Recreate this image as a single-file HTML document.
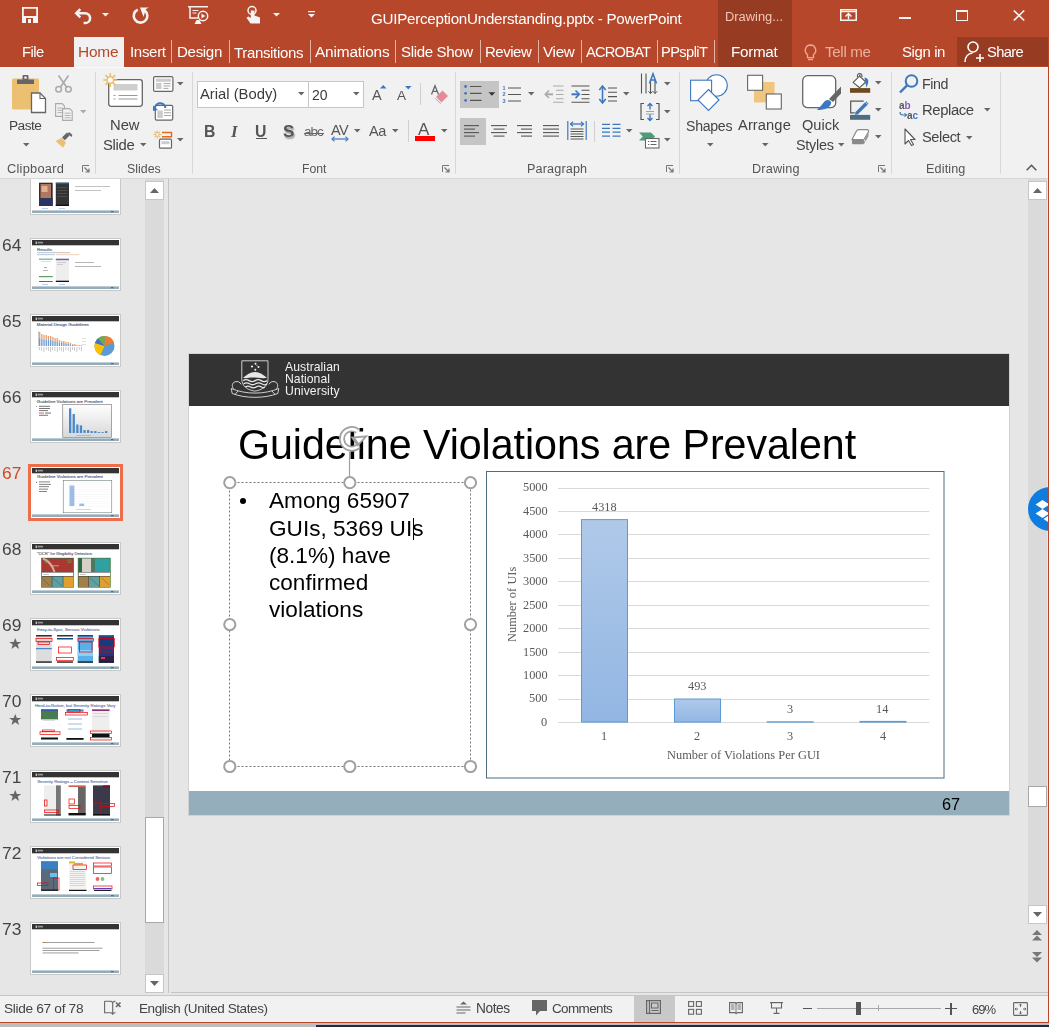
<!DOCTYPE html>
<html><head><meta charset="utf-8">
<style>
*{margin:0;padding:0;box-sizing:border-box}
html,body{width:1049px;height:1027px;overflow:hidden;background:#e6e6e6;font-family:"Liberation Sans",sans-serif;position:relative}
.a{position:absolute}
.t{position:absolute;white-space:nowrap;line-height:1;will-change:transform}
svg{position:absolute;overflow:visible}
</style></head><body>
<div class="a" style="left:0;top:0;width:1049px;height:67px;background:#b7472a"></div>
<div class="a" style="left:718px;top:0;width:74px;height:67px;background:#983b23"></div>
<div class="a" style="left:957px;top:37px;width:91px;height:29px;background:#983b23"></div>
<div class="a" style="left:74px;top:37px;width:50px;height:31px;background:#f1f1f1"></div>
<svg style="left:22px;top:7px" width="16" height="16" viewBox="0 0 16 16">
<path d="M0.9 0.9h14.2v14.2H0.9z" fill="none" stroke="#f4f4f4" stroke-width="1.8"/>
<rect x="0" y="9" width="16" height="7" fill="#f4f4f4"/>
<rect x="4" y="11" width="7" height="5" fill="#b7472a"/>
<rect x="6" y="12" width="3" height="4" fill="#f4f4f4"/>
</svg>
<svg style="left:74px;top:8px" width="19" height="16" viewBox="0 0 19 16">
<path d="M3 5.3h8.2a4.9 4.9 0 0 1 0 9.8h-1.6" fill="none" stroke="#f4f4f4" stroke-width="2.5"/>
<path d="M6.3 1.2L2.2 5.3l4.1 4.1" fill="none" stroke="#f4f4f4" stroke-width="2.5"/>
</svg>
<svg style="left:102px;top:13px" width="7" height="4" viewBox="0 0 7 4"><path d="M0 0h7l-3.5 3.5z" fill="#f4f4f4"/></svg>
<svg style="left:132px;top:6px" width="19" height="18" viewBox="0 0 19 18">
<path d="M5.8 3.6A6.8 6.8 0 1 0 12.8 4.5" fill="none" stroke="#f4f4f4" stroke-width="2.6"/>
<path d="M8 1.5h9l-3 1.5-2.5 8z" fill="#f4f4f4"/>
</svg>
<svg style="left:188px;top:6px" width="21" height="19" viewBox="0 0 21 19">
<path d="M0 0.75h20" stroke="#f4f4f4" stroke-width="1.5"/>
<path d="M2 1v11h8" fill="none" stroke="#f4f4f4" stroke-width="1.5"/>
<path d="M4.5 4.5h6M4.5 7h4" stroke="#f4f4f4" stroke-width="1.2"/>
<circle cx="15" cy="10" r="4.7" fill="none" stroke="#f4f4f4" stroke-width="1.5"/>
<path d="M13.5 7.5v5l3.8-2.5z" fill="#f4f4f4"/>
<path d="M6.5 18h7l-2-4h-3z" fill="#f4f4f4"/>
</svg>
<svg style="left:246px;top:6px" width="15" height="18" viewBox="0 0 15 18">
<circle cx="6" cy="4.5" r="4" fill="none" stroke="#f4f4f4" stroke-width="1.5"/>
<path d="M4.8 4.5v7.5l-2.5-1.5-1.8 1.2 4 5.8h9.5v-6l-5.5-2v-5z" fill="#f4f4f4"/>
</svg>
<svg style="left:273px;top:13px" width="7" height="4" viewBox="0 0 7 4"><path d="M0 0h7l-3.5 3.5z" fill="#f4f4f4"/></svg>
<svg style="left:308px;top:11px" width="7" height="8" viewBox="0 0 7 8"><path d="M0 0.6h7" stroke="#f4f4f4" stroke-width="1.2"/><path d="M0 3h7l-3.5 3.5z" fill="#f4f4f4"/></svg>
<div class="t" style="left:370.54px;top:10.55px;font-size:15.17px;letter-spacing:-0.259px;color:#fff;font-family:'Liberation Sans', sans-serif;">GUIPerceptionUnderstanding.pptx - PowerPoint</div>
<div class="t" style="left:724.91px;top:10.96px;font-size:12.92px;letter-spacing:-0.007px;color:#f3c5b5;font-family:'Liberation Sans', sans-serif;">Drawing...</div>
<svg style="left:840px;top:9px" width="17" height="12" viewBox="0 0 17 12">
<rect x="0.75" y="0.75" width="15.5" height="10.5" fill="none" stroke="#f4f4f4" stroke-width="1.5"/>
<path d="M1 2.5h15" stroke="#f4f4f4" stroke-width="1.5"/>
<path d="M8.5 4.5v6M5.5 7.5l3-3 3 3" fill="none" stroke="#f4f4f4" stroke-width="1.5"/>
</svg>
<div class="a" style="left:899px;top:17px;width:12px;height:2px;background:#f4f4f4"></div>
<div class="a" style="left:956px;top:10px;width:12px;height:11px;border:1.5px solid #f4f4f4;border-top-width:2.5px"></div>
<svg style="left:1013px;top:10px" width="12" height="11" viewBox="0 0 12 11">
<path d="M0.8 0.5l10.4 10M11.2 0.5l-10.4 10" stroke="#f4f4f4" stroke-width="1.7"/>
</svg>
<div class="t" style="left:22.06px;top:44.75px;font-size:14.71px;letter-spacing:-0.533px;color:#fff;font-family:'Liberation Sans', sans-serif;">File</div>
<div class="t" style="left:78.04px;top:44.13px;font-size:15.44px;letter-spacing:-0.229px;color:#b7472a;font-family:'Liberation Sans', sans-serif;">Home</div>
<div class="t" style="left:129.55px;top:44.46px;font-size:15.05px;letter-spacing:-0.326px;color:#fff;font-family:'Liberation Sans', sans-serif;">Insert</div>
<div class="t" style="left:176.85px;top:44.38px;font-size:15.14px;letter-spacing:-0.346px;color:#fff;font-family:'Liberation Sans', sans-serif;">Design</div>
<div class="t" style="left:233.95px;top:44.50px;font-size:15.00px;letter-spacing:-0.340px;color:#fff;font-family:'Liberation Sans', sans-serif;">Transitions</div>
<div class="t" style="left:314.54px;top:44.16px;font-size:15.40px;letter-spacing:-0.164px;color:#fff;font-family:'Liberation Sans', sans-serif;">Animations</div>
<div class="t" style="left:400.85px;top:44.44px;font-size:15.07px;letter-spacing:-0.346px;color:#fff;font-family:'Liberation Sans', sans-serif;">Slide Show</div>
<div class="t" style="left:484.55px;top:44.52px;font-size:14.97px;letter-spacing:-0.477px;color:#fff;font-family:'Liberation Sans', sans-serif;">Review</div>
<div class="t" style="left:542.54px;top:44.29px;font-size:15.25px;letter-spacing:-0.324px;color:#fff;font-family:'Liberation Sans', sans-serif;">View</div>
<div class="t" style="left:585.56px;top:44.77px;font-size:14.68px;letter-spacing:-0.810px;color:#fff;font-family:'Liberation Sans', sans-serif;">ACROBAT</div>
<div class="t" style="left:661.16px;top:44.78px;font-size:14.67px;letter-spacing:-0.590px;color:#fff;font-family:'Liberation Sans', sans-serif;">PPspliT</div>
<div class="t" style="left:731.04px;top:44.31px;font-size:15.22px;letter-spacing:-0.302px;color:#fff;font-family:'Liberation Sans', sans-serif;">Format</div>
<div class="t" style="left:902.15px;top:44.55px;font-size:14.95px;letter-spacing:-0.383px;color:#fff;font-family:'Liberation Sans', sans-serif;">Sign in</div>
<div class="t" style="left:986.56px;top:44.75px;font-size:14.71px;letter-spacing:-0.661px;color:#fff;font-family:'Liberation Sans', sans-serif;">Share</div>
<div class="a" style="left:171px;top:40px;width:1px;height:23px;background:#e6b2a4"></div>
<div class="a" style="left:229px;top:40px;width:1px;height:23px;background:#e6b2a4"></div>
<div class="a" style="left:310px;top:40px;width:1px;height:23px;background:#e6b2a4"></div>
<div class="a" style="left:395px;top:40px;width:1px;height:23px;background:#e6b2a4"></div>
<div class="a" style="left:480px;top:40px;width:1px;height:23px;background:#e6b2a4"></div>
<div class="a" style="left:538px;top:40px;width:1px;height:23px;background:#e6b2a4"></div>
<div class="a" style="left:581px;top:40px;width:1px;height:23px;background:#e6b2a4"></div>
<div class="a" style="left:657px;top:40px;width:1px;height:23px;background:#e6b2a4"></div>
<div class="a" style="left:714px;top:40px;width:1px;height:23px;background:#e6b2a4"></div>
<svg style="left:804px;top:44px" width="13" height="18" viewBox="0 0 13 18">
<path d="M6.5 1a5.3 5.3 0 0 0-3 9.6v3h6v-3A5.3 5.3 0 0 0 6.5 1z" fill="none" stroke="#e9a995" stroke-width="1.4"/>
<path d="M4 15.5h5" stroke="#e9a995" stroke-width="1.4"/>
</svg>
<div class="t" style="left:824.55px;top:44.41px;font-size:15.11px;letter-spacing:-0.310px;color:#eab09d;font-family:'Liberation Sans', sans-serif;">Tell me</div>
<svg style="left:964px;top:41px" width="20" height="22" viewBox="0 0 20 22">
<circle cx="9" cy="6" r="5" fill="none" stroke="#fff" stroke-width="1.6"/>
<path d="M1 21c0-5 3-8.5 7.5-9" fill="none" stroke="#fff" stroke-width="1.6"/>
<path d="M12 17h8M16 13v8" stroke="#fff" stroke-width="1.6"/>
</svg>
<div class="a" style="left:0;top:67px;width:1049px;height:112px;background:#f1f1f1;border-top:1px solid #fafafa;border-bottom:1px solid #d6d6d6"></div>
<div class="a" style="left:95px;top:72px;width:1px;height:102px;background:#d8d8d8"></div>
<div class="a" style="left:192px;top:72px;width:1px;height:102px;background:#d8d8d8"></div>
<div class="a" style="left:455px;top:72px;width:1px;height:102px;background:#d8d8d8"></div>
<div class="a" style="left:679px;top:72px;width:1px;height:102px;background:#d8d8d8"></div>
<div class="a" style="left:891px;top:72px;width:1px;height:102px;background:#d8d8d8"></div>
<div class="a" style="left:1000px;top:72px;width:1px;height:102px;background:#d8d8d8"></div>
<div class="t" style="left:7.12px;top:162.94px;font-size:12.82px;letter-spacing:0.251px;color:#555;font-family:'Liberation Sans', sans-serif;">Clipboard</div>
<div class="t" style="left:126.63px;top:163.33px;font-size:12.36px;letter-spacing:0.005px;color:#555;font-family:'Liberation Sans', sans-serif;">Slides</div>
<div class="t" style="left:302.13px;top:163.43px;font-size:12.25px;letter-spacing:-0.070px;color:#555;font-family:'Liberation Sans', sans-serif;">Font</div>
<div class="t" style="left:527.12px;top:163.11px;font-size:12.62px;letter-spacing:0.156px;color:#555;font-family:'Liberation Sans', sans-serif;">Paragraph</div>
<div class="t" style="left:751.62px;top:163.08px;font-size:12.67px;letter-spacing:0.190px;color:#555;font-family:'Liberation Sans', sans-serif;">Drawing</div>
<div class="t" style="left:925.82px;top:163.11px;font-size:12.62px;letter-spacing:0.135px;color:#555;font-family:'Liberation Sans', sans-serif;">Editing</div>
<svg style="left:82.0px;top:165.0px" width="8" height="8" viewBox="0 0 8 8">
<path d="M0.5 7V0.5H7" fill="none" stroke="#777" stroke-width="1"/><path d="M2.5 2.5L7 7M7 3.5V7H3.5" fill="none" stroke="#777" stroke-width="1.2"/></svg>
<svg style="left:441.8px;top:165.0px" width="8" height="8" viewBox="0 0 8 8">
<path d="M0.5 7V0.5H7" fill="none" stroke="#777" stroke-width="1"/><path d="M2.5 2.5L7 7M7 3.5V7H3.5" fill="none" stroke="#777" stroke-width="1.2"/></svg>
<svg style="left:665.7px;top:165.0px" width="8" height="8" viewBox="0 0 8 8">
<path d="M0.5 7V0.5H7" fill="none" stroke="#777" stroke-width="1"/><path d="M2.5 2.5L7 7M7 3.5V7H3.5" fill="none" stroke="#777" stroke-width="1.2"/></svg>
<svg style="left:877.7px;top:165.0px" width="8" height="8" viewBox="0 0 8 8">
<path d="M0.5 7V0.5H7" fill="none" stroke="#777" stroke-width="1"/><path d="M2.5 2.5L7 7M7 3.5V7H3.5" fill="none" stroke="#777" stroke-width="1.2"/></svg>
<svg style="left:1026px;top:164px" width="11" height="7" viewBox="0 0 11 7"><path d="M0.7 6.3L5.5 1.3l4.8 5" fill="none" stroke="#555" stroke-width="1.5"/></svg>
<svg style="left:12px;top:74px" width="35" height="40" viewBox="0 0 35 40">
<rect x="0" y="4.5" width="27" height="31" rx="1.5" fill="#ebc073"/>
<path d="M5 5.5h17v4.5h-17z" fill="#666"/>
<rect x="10.5" y="1" width="6" height="5" rx="1" fill="#666"/>
<rect x="12.3" y="2.5" width="2.4" height="2.2" fill="#f1f1f1"/>
<path d="M19.5 19h8.5l5.5 5.5v14h-14z" fill="#fff" stroke="#666" stroke-width="1.3"/>
<path d="M28 19v5.5h5.5" fill="none" stroke="#666" stroke-width="1.1"/>
</svg>
<div class="t" style="left:9.39px;top:118.80px;font-size:13.70px;letter-spacing:-0.534px;color:#444444;font-family:'Liberation Sans', sans-serif;">Paste</div>
<svg style="left:22.8px;top:142.6px" width="7" height="4" viewBox="0 0 7 4"><path d="M0 0h6.5l-3.25 3.5z" fill="#666"/></svg>
<svg style="left:55px;top:75px" width="17" height="18" viewBox="0 0 17 18">
<path d="M3.5 0.5l8 11.5M13.5 0.5l-8 11.5" stroke="#aaa" stroke-width="1.6"/>
<circle cx="3.6" cy="14.2" r="2.8" fill="none" stroke="#aaa" stroke-width="1.5"/>
<circle cx="13.4" cy="14.2" r="2.8" fill="none" stroke="#aaa" stroke-width="1.5"/>
</svg>
<svg style="left:55px;top:103px" width="18" height="18" viewBox="0 0 18 18">
<path d="M0.6 0.6h6.5l2.3 2.3v10.5H0.6z" fill="#f1f1f1" stroke="#aaa" stroke-width="1.1"/>
<path d="M2.5 5h5M2.5 7.3h5M2.5 9.6h5" stroke="#aaa" stroke-width="0.9"/>
<path d="M7.6 5.6h7l2.6 2.6v9.2H7.6z" fill="#f1f1f1" stroke="#aaa" stroke-width="1.1"/>
<path d="M9.6 10.2h6M9.6 12.5h6M9.6 14.8h6" stroke="#aaa" stroke-width="0.9"/>
</svg>
<svg style="left:80.0px;top:110.4px" width="7" height="4" viewBox="0 0 7 4"><path d="M0 0h6.5l-3.25 3.5z" fill="#aaa"/></svg>
<svg style="left:55px;top:132px" width="18" height="16" viewBox="0 0 18 16">
<path d="M0.5 9l6-3 4.5 4.5-3 5.2z" fill="#ebc073"/>
<path d="M7 5.5l5-5 2.8 2.8-5 5z" fill="#666"/>
<path d="M12.6 1.2l2-1 2.8 2.8-1 2z" fill="#666"/>
</svg>
<svg style="left:104px;top:72px" width="40" height="36" viewBox="0 0 40 36">
<rect x="4.7" y="7.7" width="33.6" height="26.6" rx="2.5" fill="#fff" stroke="#666" stroke-width="1.3"/>
<rect x="9.5" y="12" width="24" height="6.5" fill="#cfcfcf"/>
<path d="M9.5 23.5h2M14.5 23.5h19M9.5 27h2M14.5 27h19" stroke="#999" stroke-width="1"/>
<g stroke="#ebc073" stroke-width="1.6"><path d="M6.3 1v14M-0.7 8h14M1.4 3.1l9.8 9.8M11.2 3.1l-9.8 9.8"/></g>
<circle cx="6.3" cy="8" r="3.2" fill="#fff" stroke="#ebc073" stroke-width="1.4"/>
</svg>
<div class="t" style="left:110.06px;top:118.08px;font-size:14.79px;letter-spacing:-0.040px;color:#444444;font-family:'Liberation Sans', sans-serif;">New</div>
<div class="t" style="left:103.25px;top:138.02px;font-size:14.85px;letter-spacing:-0.308px;color:#444444;font-family:'Liberation Sans', sans-serif;">Slide</div>
<svg style="left:140.0px;top:143.0px" width="7" height="4" viewBox="0 0 7 4"><path d="M0 0h6.5l-3.25 3.5z" fill="#666"/></svg>
<svg style="left:153px;top:76px" width="21" height="16" viewBox="0 0 21 16">
<rect x="0.6" y="0.6" width="19.3" height="14.8" rx="1.5" fill="#fff" stroke="#666" stroke-width="1.2"/>
<rect x="3" y="2.6" width="15" height="3.2" fill="#ccc"/><rect x="3" y="7" width="5.5" height="6" fill="#ccc"/>
<path d="M10.5 7.6h7M10.5 10h7M10.5 12.4h5" stroke="#999" stroke-width="0.9"/>
</svg>
<svg style="left:177.0px;top:82.0px" width="7" height="4" viewBox="0 0 7 4"><path d="M0 0h6.5l-3.25 3.5z" fill="#666"/></svg>
<svg style="left:153px;top:103px" width="21" height="18" viewBox="0 0 21 18">
<rect x="2.3" y="2.3" width="17.4" height="14.8" rx="1.3" fill="#fff" stroke="#666" stroke-width="1.2"/>
<rect x="4.3" y="7.5" width="5.5" height="7.5" fill="#ccc"/><path d="M11 7h7M11 9.8h7M11 12.6h7" stroke="#999" stroke-width="0.9"/>
<path d="M1.8 6.3A5 5 0 0 1 12.5 5" fill="none" stroke="#3c78c0" stroke-width="2"/>
<path d="M0 2.6l0 5.5 5-1z" fill="#3c78c0"/>
</svg>
<svg style="left:153px;top:130px" width="20" height="19" viewBox="0 0 20 19">
<g stroke="#ebc073" stroke-width="1.2"><path d="M4.3 0.5v8M0.3 4.5h8M1.5 1.7l5.6 5.6M7.1 1.7l-5.6 5.6"/></g>
<circle cx="4.3" cy="4.5" r="1.8" fill="#f1f1f1" stroke="#ebc073" stroke-width="1"/>
<path d="M9 2.5h9.5v4.2H9" fill="none" stroke="#e26b1f" stroke-width="1.4"/>
<rect x="6.5" y="9.2" width="12" height="9" rx="1" fill="#fff" stroke="#666" stroke-width="1.2"/>
<rect x="8.5" y="11.2" width="8" height="3" fill="#ccc"/>
</svg>
<svg style="left:177.0px;top:138.0px" width="7" height="4" viewBox="0 0 7 4"><path d="M0 0h6.5l-3.25 3.5z" fill="#666"/></svg>
<div class="a" style="left:197px;top:81px;width:112px;height:27px;background:#fff;border:1px solid #c6c6c6"></div>
<div class="a" style="left:308px;top:81px;width:56px;height:27px;background:#fff;border:1px solid #c6c6c6"></div>
<div class="t" style="left:200.26px;top:87.06px;font-size:14.81px;letter-spacing:-0.007px;color:#3b3b3b;font-family:'Liberation Sans', sans-serif;">Arial (Body)</div>
<div class="t" style="left:312.08px;top:87.75px;font-size:14.00px;letter-spacing:0.000px;color:#3b3b3b;font-family:'Liberation Sans', sans-serif;">20</div>
<svg style="left:297.5px;top:92.0px" width="7" height="4" viewBox="0 0 7 4"><path d="M0 0h6.5l-3.25 3.5z" fill="#666"/></svg>
<svg style="left:352.5px;top:92.0px" width="7" height="4" viewBox="0 0 7 4"><path d="M0 0h6.5l-3.25 3.5z" fill="#666"/></svg>
<div class="t" style="left:371.96px;top:88.12px;font-size:14.50px;letter-spacing:0.000px;color:#555;font-family:'Liberation Sans', sans-serif;">A</div>
<svg style="left:380px;top:85px" width="7" height="4" viewBox="0 0 7 4"><path d="M0 3.5h6.5L3.25 0z" fill="#3c78c0"/></svg>
<div class="t" style="left:397.10px;top:88.97px;font-size:13.50px;letter-spacing:0.000px;color:#555;font-family:'Liberation Sans', sans-serif;">A</div>
<svg style="left:404.5px;top:85.5px" width="7" height="4" viewBox="0 0 7 4"><path d="M0 0h6.5L3.25 3.5z" fill="#3c78c0"/></svg>
<div class="a" style="left:420px;top:83px;width:1px;height:22px;background:#d0d0d0"></div>
<svg style="left:431px;top:85px" width="18" height="19" viewBox="0 0 18 19">
<path d="M0.5 9.5L4 0.8 7.5 9.5M1.8 6.3h4.4" fill="none" stroke="#666" stroke-width="1.3"/>
<path d="M11.5 5.5l5.5 5.5-6.5 6.5-5.5-5.5z" fill="#e58a9a"/>
<path d="M4.2 13.3l5.5 5.5" stroke="#e58a9a" stroke-width="1"/>
</svg>
<div class="t" style="left:203.73px;top:123.62px;font-size:15.80px;letter-spacing:0.000px;color:#555;font-family:'Liberation Sans', sans-serif;font-weight:bold">B</div>
<div class="t" style="left:231.49px;top:122.61px;font-size:17.00px;letter-spacing:0.000px;color:#555;font-family:'Liberation Sans', sans-serif;font-style:italic;font-weight:bold;font-family:'Liberation Serif',serif">I</div>
<div class="t" style="left:255.33px;top:123.52px;font-size:15.80px;letter-spacing:0.000px;color:#555;font-family:'Liberation Sans', sans-serif;font-weight:bold">U</div>
<div class="a" style="left:256px;top:138px;width:11px;height:1.3px;background:#555"></div>
<div class="t" style="left:282.79px;top:122.81px;font-size:17.00px;letter-spacing:0.000px;color:#555;font-family:'Liberation Sans', sans-serif;font-weight:bold;text-shadow:1px 1.5px 1.5px #999">S</div>
<div class="t" style="left:303.60px;top:125.27px;font-size:13.50px;letter-spacing:-1.033px;color:#666;font-family:'Liberation Sans', sans-serif;">abc</div>
<div class="a" style="left:304px;top:132.5px;width:20px;height:1.2px;background:#666"></div>
<div class="t" style="left:330.87px;top:123.22px;font-size:14.50px;letter-spacing:-0.568px;color:#555;font-family:'Liberation Sans', sans-serif;">AV</div>
<svg style="left:331px;top:136px" width="18" height="6" viewBox="0 0 18 6">
<path d="M1.5 3h15" stroke="#3c78c0" stroke-width="1.2"/><path d="M3.5 0.6L1 3l2.5 2.4M14.5 0.6L17 3l-2.5 2.4" fill="none" stroke="#3c78c0" stroke-width="1.2"/></svg>
<svg style="left:354.0px;top:129.0px" width="7" height="4" viewBox="0 0 7 4"><path d="M0 0h6.5l-3.25 3.5z" fill="#666"/></svg>
<div class="t" style="left:369.26px;top:123.72px;font-size:14.50px;letter-spacing:-0.438px;color:#555;font-family:'Liberation Sans', sans-serif;">Aa</div>
<svg style="left:391.7px;top:129.0px" width="7" height="4" viewBox="0 0 7 4"><path d="M0 0h6.5l-3.25 3.5z" fill="#666"/></svg>
<div class="a" style="left:408px;top:120px;width:1px;height:22px;background:#d0d0d0"></div>
<div class="t" style="left:418.49px;top:121.01px;font-size:17.00px;letter-spacing:0.000px;color:#555;font-family:'Liberation Sans', sans-serif;">A</div>
<div class="a" style="left:415px;top:136px;width:20px;height:5px;background:#f00"></div>
<svg style="left:441.0px;top:129.0px" width="7" height="4" viewBox="0 0 7 4"><path d="M0 0h6.5l-3.25 3.5z" fill="#666"/></svg>
<div class="a" style="left:460px;top:81px;width:39px;height:27px;background:#c5c5c5"></div>
<div class="a" style="left:460px;top:118px;width:26px;height:27px;background:#c5c5c5"></div>
<svg style="left:464px;top:85px" width="35" height="19" viewBox="0 0 35 19">
<g fill="#3c78c0"><circle cx="1.6" cy="1.5" r="1.4"/><circle cx="1.6" cy="8.3" r="1.4"/><circle cx="1.6" cy="15.4" r="1.4"/></g>
<path d="M6 1.5h11.5M6 8.3h11.5M6 15.4h11.5" stroke="#555" stroke-width="1.2"/>
<path d="M24.5 7.3h6.8l-3.4 3.4z" fill="#333"/>
</svg>
<svg style="left:502px;top:84px" width="20" height="20" viewBox="0 0 20 20">
<g fill="#3c78c0" font-size="5.5" font-family="Liberation Sans" font-weight="bold"><text x="0.5" y="5.5">1</text><text x="0.5" y="12">2</text><text x="0.5" y="18.5">3</text></g>
<path d="M6 4h13M6 10.5h13M6 17h13" stroke="#555" stroke-width="1.1"/>
</svg>
<svg style="left:528.0px;top:91.5px" width="7" height="4" viewBox="0 0 7 4"><path d="M0 0h6.5l-3.25 3.5z" fill="#666"/></svg>
<svg style="left:545px;top:85px" width="19" height="18" viewBox="0 0 19 18">
<path d="M8 1h10.5M11 5.3h7.5M11 9.5h7.5M11 13.7h7.5M8 17.3h10.5" stroke="#aaa" stroke-width="1.1"/>
<path d="M0.5 9.3h7.5" stroke="#aaa" stroke-width="2"/><path d="M4 5.5L0.3 9.3 4 13" fill="none" stroke="#aaa" stroke-width="1.6"/>
</svg>
<svg style="left:571px;top:85px" width="19" height="18" viewBox="0 0 19 18">
<path d="M0.5 1h18M10.5 5.3h8M10.5 9.5h8M10.5 13.7h8M0.5 17.3h18" stroke="#555" stroke-width="1.1"/>
<path d="M0.5 9.3h7.5" stroke="#3c78c0" stroke-width="2"/><path d="M4.5 5.5l3.8 3.8-3.8 3.8" fill="none" stroke="#3c78c0" stroke-width="1.6"/>
</svg>
<svg style="left:599px;top:85px" width="19" height="19" viewBox="0 0 19 19">
<path d="M3.5 2v15" stroke="#3c78c0" stroke-width="1.6"/><path d="M0.3 5L3.5 1l3.2 4M0.3 14l3.2 4 3.2-4" fill="none" stroke="#3c78c0" stroke-width="1.6"/>
<path d="M9 3h9M9 7.3h9M9 11.6h9M9 16h9" stroke="#555" stroke-width="1.1"/>
</svg>
<svg style="left:623.0px;top:91.5px" width="7" height="4" viewBox="0 0 7 4"><path d="M0 0h6.5l-3.25 3.5z" fill="#666"/></svg>
<svg style="left:640px;top:73px" width="21" height="22" viewBox="0 0 21 22">
<path d="M1.5 0.5v20M6 0.5v20M10.5 7v13.5M15 7v13.5" stroke="#555" stroke-width="1.1"/>
<path d="M8.5 18.3l2 2.3 2-2.3M13 18.3l2 2.3 2-2.3" fill="none" stroke="#555" stroke-width="1"/>
<path d="M9.5 10.5L13 0.8 16.5 10.5M10.8 7h4.4" fill="none" stroke="#3c78c0" stroke-width="1.6"/>
</svg>
<svg style="left:664.0px;top:82.0px" width="7" height="4" viewBox="0 0 7 4"><path d="M0 0h6.5l-3.25 3.5z" fill="#666"/></svg>
<svg style="left:640px;top:102px" width="21" height="20" viewBox="0 0 21 20">
<path d="M4 1.5H1v16h3M16 1.5h3v16h-3" fill="none" stroke="#555" stroke-width="1.2"/>
<path d="M6 9.5h8M6 12h8" stroke="#999" stroke-width="0.9"/>
<path d="M10 1.5v6M10 12.5v6M7.5 4l2.5-2.5L12.5 4M7.5 16l2.5 2.5 2.5-2.5" fill="none" stroke="#3c78c0" stroke-width="1.4"/>
</svg>
<svg style="left:664.0px;top:110.0px" width="7" height="4" viewBox="0 0 7 4"><path d="M0 0h6.5l-3.25 3.5z" fill="#666"/></svg>
<svg style="left:639px;top:132px" width="21" height="17" viewBox="0 0 21 17">
<path d="M0 0.5h12l4 4-4 4H0l3.8-4z" fill="#4d9c7a"/>
<rect x="6.5" y="6.5" width="13.5" height="9.5" fill="#fff" stroke="#666" stroke-width="1.1"/>
<path d="M9 9.5h1.2M11.5 9.5h6M9 12.5h1.2M11.5 12.5h6" stroke="#666" stroke-width="1"/>
</svg>
<svg style="left:664.0px;top:138.0px" width="7" height="4" viewBox="0 0 7 4"><path d="M0 0h6.5l-3.25 3.5z" fill="#666"/></svg>
<svg style="left:464.0px;top:125.0px" width="20" height="12" viewBox="0 0 20 12"><path d="M0.0 0.6h15.0" stroke="#555" stroke-width="1.1"/><path d="M0.0 4.1h11.0" stroke="#555" stroke-width="1.1"/><path d="M0.0 7.6h15.0" stroke="#555" stroke-width="1.1"/><path d="M0.0 11.1h11.0" stroke="#555" stroke-width="1.1"/></svg>
<svg style="left:491.0px;top:125.0px" width="20" height="12" viewBox="0 0 20 12"><path d="M0.0 0.6h16.0" stroke="#555" stroke-width="1.1"/><path d="M2.5 4.1h11.0" stroke="#555" stroke-width="1.1"/><path d="M0.0 7.6h16.0" stroke="#555" stroke-width="1.1"/><path d="M2.5 11.1h11.0" stroke="#555" stroke-width="1.1"/></svg>
<svg style="left:517.0px;top:125.0px" width="20" height="12" viewBox="0 0 20 12"><path d="M0.0 0.6h15.0" stroke="#555" stroke-width="1.1"/><path d="M4.0 4.1h11.0" stroke="#555" stroke-width="1.1"/><path d="M0.0 7.6h15.0" stroke="#555" stroke-width="1.1"/><path d="M4.0 11.1h11.0" stroke="#555" stroke-width="1.1"/></svg>
<svg style="left:543.0px;top:125.0px" width="20" height="12" viewBox="0 0 20 12"><path d="M0.0 0.6h16.0" stroke="#555" stroke-width="1.1"/><path d="M0.0 4.1h16.0" stroke="#555" stroke-width="1.1"/><path d="M0.0 7.6h16.0" stroke="#555" stroke-width="1.1"/><path d="M0.0 11.1h16.0" stroke="#555" stroke-width="1.1"/></svg>
<svg style="left:567px;top:121px" width="20" height="19" viewBox="0 0 20 19">
<path d="M0.8 0v19M19.2 0v19" stroke="#3c78c0" stroke-width="1.2"/>
<path d="M3.5 3h13" stroke="#3c78c0" stroke-width="1.3"/><path d="M6 0.8L3.5 3 6 5.2M14 0.8L16.5 3 14 5.2" fill="none" stroke="#3c78c0" stroke-width="1.2"/>
<path d="M3.5 8h13M3.5 10.5h13M3.5 13h13M3.5 15.5h13M3.5 18h13" stroke="#555" stroke-width="1"/>
</svg>
<div class="a" style="left:594px;top:121px;width:1px;height:21px;background:#d0d0d0"></div>
<svg style="left:602px;top:123px" width="19" height="15" viewBox="0 0 19 15">
<path d="M0 1.4h8M0 5.3h8M0 9.2h8M0 13.1h8M10.5 1.4h8M10.5 5.3h8M10.5 9.2h8M10.5 13.1h8" stroke="#3c78c0" stroke-width="1.2"/>
</svg>
<svg style="left:626.0px;top:129.0px" width="7" height="4" viewBox="0 0 7 4"><path d="M0 0h6.5l-3.25 3.5z" fill="#666"/></svg>
<svg style="left:690px;top:73px" width="39" height="38" viewBox="0 0 39 38">
<circle cx="26.5" cy="12.5" r="10.8" fill="#fff" stroke="#3c78c0" stroke-width="1.1"/>
<rect x="0.6" y="7.2" width="21" height="20.5" fill="#fff" stroke="#3c78c0" stroke-width="1.1"/>
<path d="M18.5 16.5l10.5 10.5-10.5 10.5-10.5-10.5z" fill="#fff" stroke="#3c78c0" stroke-width="1.1"/>
</svg>
<div class="t" style="left:685.88px;top:118.54px;font-size:14.12px;letter-spacing:-0.280px;color:#444444;font-family:'Liberation Sans', sans-serif;">Shapes</div>
<svg style="left:707.0px;top:142.7px" width="7" height="4" viewBox="0 0 7 4"><path d="M0 0h6.5l-3.25 3.5z" fill="#666"/></svg>
<svg style="left:746px;top:74px" width="37" height="36" viewBox="0 0 37 36">
<rect x="8" y="8" width="20.6" height="20.4" fill="#f0c67e"/>
<rect x="1.6" y="1.3" width="15" height="15" fill="#fff" stroke="#666" stroke-width="1.1"/>
<rect x="20.3" y="20" width="15" height="15" fill="#fff" stroke="#666" stroke-width="1.1"/>
</svg>
<div class="t" style="left:737.56px;top:118.06px;font-size:14.69px;letter-spacing:0.091px;color:#444444;font-family:'Liberation Sans', sans-serif;">Arrange</div>
<svg style="left:761.6px;top:142.7px" width="7" height="4" viewBox="0 0 7 4"><path d="M0 0h6.5l-3.25 3.5z" fill="#666"/></svg>
<svg style="left:802px;top:75px" width="40" height="39" viewBox="0 0 40 39">
<rect x="0.7" y="0.7" width="33" height="32" rx="5" fill="#fff" stroke="#666" stroke-width="1.3"/>
<path d="M27 24l12-12.5v7L31 27z" fill="#666"/>
<path d="M22 27c3-3 6-2 7 0s-2 6-6 7c-3 1-8 1-8 1s4-4 7-8z" fill="#3c78c0"/>
</svg>
<div class="t" style="left:801.56px;top:118.17px;font-size:14.56px;letter-spacing:0.018px;color:#444444;font-family:'Liberation Sans', sans-serif;">Quick</div>
<div class="t" style="left:795.57px;top:138.42px;font-size:14.39px;letter-spacing:-0.237px;color:#444444;font-family:'Liberation Sans', sans-serif;">Styles</div>
<svg style="left:838.3px;top:142.7px" width="7" height="4" viewBox="0 0 7 4"><path d="M0 0h6.5l-3.25 3.5z" fill="#666"/></svg>
<svg style="left:850px;top:73px" width="21" height="20" viewBox="0 0 21 20">
<path d="M7.5 4.2c-0.5-2.2 0.5-3.7 2.2-3.7s2.6 1.5 2.2 3.5M9.8 1.5v5" fill="none" stroke="#555" stroke-width="1.1"/>
<path d="M3.1 9.4L9.6 3.2 15.8 9 9.6 14.7z" fill="#fff" stroke="#555" stroke-width="1.1" stroke-linejoin="round"/>
<path d="M14.5 4.6c2.5 0.3 4.2 2 3.8 4.3-0.3 2-1.3 3.8-1.8 5.8-0.5-2-0.8-3.8-1.3-5.2z" fill="#3c78c0"/>
<rect x="0" y="15.1" width="20.2" height="4.7" fill="#6e4a1e"/>
</svg>
<svg style="left:875.0px;top:81.0px" width="7" height="4" viewBox="0 0 7 4"><path d="M0 0h6.5l-3.25 3.5z" fill="#666"/></svg>
<svg style="left:850px;top:100px" width="21" height="20" viewBox="0 0 21 20">
<path d="M13.7 1.2H0.7v11.7h4" fill="none" stroke="#555" stroke-width="1.2"/>
<path d="M6.3 13.6L17.6 2.3" stroke="#3c78c0" stroke-width="3.4"/>
<path d="M16.3 3.6l1.3-1.3" stroke="#f1f1f1" stroke-width="3.6" stroke-dasharray="0.6 0.8"/>
<path d="M4.8 15L6 11.5 8.5 14z" fill="#3c78c0"/>
<rect x="0" y="14.9" width="20.2" height="4.9" fill="#4e6e80"/>
</svg>
<svg style="left:875.0px;top:107.5px" width="7" height="4" viewBox="0 0 7 4"><path d="M0 0h6.5l-3.25 3.5z" fill="#666"/></svg>
<svg style="left:851px;top:129px" width="19" height="16" viewBox="0 0 19 16">
<path d="M1 10.5L5.5 2c0.5-0.9 1.2-1.3 2.2-1.3h8.3c1.3 0 2 1 1.5 2L13 10.5z" fill="#fff" stroke="#888" stroke-width="1.2" stroke-linejoin="round"/>
<path d="M1 10.5h12v3.5c0 0.8-0.6 1.3-1.4 1.3H2.4C1.6 15.3 1 14.8 1 14z" fill="#8a8a8a"/>
<path d="M13 10.5l4.5-7.8v3.8c0 0.6-0.1 1-0.4 1.5L13 15z" fill="#9a9a9a"/>
<path d="M13 10.5l1.2 2" stroke="#fff" stroke-width="0.9"/>
</svg>
<svg style="left:875.0px;top:134.5px" width="7" height="4" viewBox="0 0 7 4"><path d="M0 0h6.5l-3.25 3.5z" fill="#666"/></svg>
<svg style="left:899px;top:74px" width="20" height="19" viewBox="0 0 20 19">
<circle cx="12.5" cy="7" r="5.8" fill="none" stroke="#3c78c0" stroke-width="2"/>
<path d="M8.3 11.2L1 18.5" stroke="#3c78c0" stroke-width="2.4"/>
</svg>
<div class="t" style="left:922.27px;top:76.74px;font-size:14.25px;letter-spacing:-0.471px;color:#444444;font-family:'Liberation Sans', sans-serif;">Find</div>
<svg style="left:899px;top:101px" width="20" height="18" viewBox="0 0 20 18">
<g font-family="Liberation Sans" font-size="10" font-weight="bold"><text x="0" y="8" fill="#555">a</text><text x="5.6" y="8" fill="#8a5bb0">b</text><text x="8" y="17.5" fill="#555">a</text><text x="13.6" y="17.5" fill="#3c78c0">c</text></g>
<path d="M1 11c0 2 1 3 3 3h3.5" fill="none" stroke="#3c78c0" stroke-width="1.1"/><path d="M5.5 12.3l2 1.7-2 1.7" fill="none" stroke="#3c78c0" stroke-width="1.1"/>
</svg>
<div class="t" style="left:922.25px;top:102.90px;font-size:14.88px;letter-spacing:-0.414px;color:#444444;font-family:'Liberation Sans', sans-serif;">Replace</div>
<svg style="left:984.3px;top:108.0px" width="7" height="4" viewBox="0 0 7 4"><path d="M0 0h6.5l-3.25 3.5z" fill="#666"/></svg>
<svg style="left:904px;top:128px" width="12" height="18" viewBox="0 0 12 18">
<path d="M1 1v15l3.5-3.5 3 5 2-1-3-5H11z" fill="#fff" stroke="#555" stroke-width="1.1" stroke-linejoin="round"/>
</svg>
<div class="t" style="left:922.26px;top:130.38px;font-size:14.67px;letter-spacing:-0.412px;color:#444444;font-family:'Liberation Sans', sans-serif;">Select</div>
<svg style="left:966.0px;top:135.6px" width="7" height="4" viewBox="0 0 7 4"><path d="M0 0h6.5l-3.25 3.5z" fill="#666"/></svg>
<div class="a" style="left:0;top:179px;width:168px;height:816px;background:#e6e6e6;overflow:hidden">
<div class="a" style="left:30px;top:-17.0px;width:91px;height:53px;background:#fff;border:1px solid #c8c8c8"></div><svg style="left:32px;top:-15.0px" width="87" height="49" viewBox="0 0 87 49"><rect x="0" y="0" width="87" height="49" fill="#fff"/><rect x="0" y="0" width="87" height="5.3" fill="#333"/><path d="M3.6 1.4h1.6v1.8l-0.8 1-0.8-1z" fill="#bbb"/><rect x="6" y="1.8" width="5" height="1.6" fill="#999"/><rect x="5.0" y="14.5" width="18.0" height="0.6" fill="#7fa3d8"/><rect x="24.0" y="14.5" width="23.0" height="0.6" fill="#f0b080"/><rect x="7" y="18.7" width="13.7" height="23.3" fill="#3a2a30"/><rect x="8.5" y="20" width="10.5" height="14" fill="#b07860"/><rect x="9.5" y="22" width="6" height="6" fill="#e0b090"/><rect x="7" y="34" width="13.7" height="8" fill="#2a3560"/><rect x="23.8" y="18.7" width="13.2" height="23.3" fill="#333"/><rect x="23.8" y="18.7" width="13.2" height="1.5" fill="#2a5a80"/><rect x="23.8" y="40.7" width="13.2" height="1.3" fill="#111"/><rect x="25.0" y="23.0" width="10.0" height="0.5" fill="#666"/><rect x="25.0" y="26.0" width="10.0" height="0.5" fill="#666"/><rect x="25.0" y="29.0" width="10.0" height="0.5" fill="#666"/><rect x="25.0" y="32.0" width="10.0" height="0.5" fill="#666"/><rect x="44.0" y="22.0" width="34.0" height="0.6" fill="#999"/><rect x="43.0" y="22.0" width="1.0" height="0.6" fill="#e08040"/><rect x="44.0" y="26.0" width="25.0" height="0.6" fill="#999"/><rect x="43.0" y="26.0" width="1.0" height="0.6" fill="#e08040"/><rect x="10.0" y="44.0" width="6.0" height="0.6" fill="#8ab0e0"/><rect x="27.0" y="44.0" width="6.0" height="0.6" fill="#8ab0e0"/><rect x="0" y="46.4" width="87" height="2.6" fill="#94adba"/><rect x="79" y="47.2" width="2.5" height="1" fill="#555"/></svg>
<div class="a" style="left:30px;top:59.0px;width:91px;height:53px;background:#fff;border:1px solid #c8c8c8"></div><svg style="left:32px;top:61.0px" width="87" height="49" viewBox="0 0 87 49"><rect x="0" y="0" width="87" height="49" fill="#fff"/><rect x="0" y="0" width="87" height="5.3" fill="#333"/><path d="M3.6 1.4h1.6v1.8l-0.8 1-0.8-1z" fill="#bbb"/><rect x="6" y="1.8" width="5" height="1.6" fill="#999"/><text x="4.9" y="10.8" font-family="Liberation Sans" font-weight="normal" font-size="4.26" stroke-width="0.12" stroke="#4f5d7c" fill="#4f5d7c" textLength="15.0" lengthAdjust="spacingAndGlyphs">Results</text><rect x="5.0" y="12.5" width="33.0" height="0.6" fill="#999"/><rect x="5.0" y="14.5" width="18.0" height="0.6" fill="#7fa3d8"/><rect x="24.0" y="14.5" width="23.0" height="0.6" fill="#f0b080"/><rect x="7" y="18.7" width="13.7" height="23.3" fill="#fff"/><rect x="7.0" y="18.7" width="13.7" height="0.9" fill="#3a9a50"/><rect x="9.0" y="21.0" width="10.0" height="0.5" fill="#bbb"/><rect x="12.0" y="27.0" width="3.0" height="1.0" fill="#e0a030"/><rect x="11.0" y="30.0" width="5.0" height="0.8" fill="#aaa"/><rect x="7.0" y="36.0" width="13.7" height="1.2" fill="#5aa060"/><rect x="7.0" y="41.0" width="13.7" height="1.0" fill="#2a8a40"/><rect x="23.8" y="18.7" width="13.2" height="23.3" fill="#eee"/><rect x="23.8" y="18.7" width="13.2" height="1.5" fill="#7060b0"/><rect x="23.8" y="40.7" width="13.2" height="1.3" fill="#111"/><rect x="25.0" y="22.0" width="9.0" height="0.5" fill="#aaa"/><rect x="25.0" y="24.0" width="6.0" height="0.5" fill="#aaa"/><rect x="44.0" y="22.0" width="18.0" height="0.7" fill="#999"/><rect x="44.0" y="26.0" width="25.0" height="0.7" fill="#999"/><rect x="43.0" y="22.0" width="1.0" height="0.7" fill="#e08040"/><rect x="43.0" y="26.0" width="1.0" height="0.7" fill="#e08040"/><rect x="10.0" y="44.0" width="6.0" height="0.6" fill="#8ab0e0"/><rect x="27.0" y="44.0" width="6.0" height="0.6" fill="#8ab0e0"/><rect x="0" y="46.4" width="87" height="2.6" fill="#94adba"/><rect x="79" y="47.2" width="2.5" height="1" fill="#555"/></svg><div class="t" style="left:1.6px;top:58.24px;font-size:17.4px;color:#444">64</div>
<div class="a" style="left:30px;top:135.0px;width:91px;height:53px;background:#fff;border:1px solid #c8c8c8"></div><svg style="left:32px;top:137.0px" width="87" height="49" viewBox="0 0 87 49"><rect x="0" y="0" width="87" height="49" fill="#fff"/><rect x="0" y="0" width="87" height="5.3" fill="#333"/><path d="M3.6 1.4h1.6v1.8l-0.8 1-0.8-1z" fill="#bbb"/><rect x="6" y="1.8" width="5" height="1.6" fill="#999"/><text x="4.8" y="10.2" font-family="Liberation Sans" font-weight="normal" font-size="3.81" stroke-width="0.12" stroke="#4f5d7c" fill="#4f5d7c" textLength="52.0" lengthAdjust="spacingAndGlyphs">Material Design Guidelines</text><rect x="7.0" y="21.6" width="1.3" height="8.4" fill="#6a9ad0"/><rect x="7.0" y="16.0" width="1.3" height="5.6" fill="#e8a070"/><rect x="7.3" y="31.0" width="0.5" height="3.0" fill="#999"/><rect x="9.2" y="22.8" width="1.3" height="7.2" fill="#6a9ad0"/><rect x="9.2" y="18.0" width="1.3" height="4.8" fill="#e8a070"/><rect x="9.5" y="31.0" width="0.5" height="4.0" fill="#999"/><rect x="11.4" y="23.4" width="1.3" height="6.6" fill="#6a9ad0"/><rect x="11.4" y="19.0" width="1.3" height="4.4" fill="#e8a070"/><rect x="11.7" y="31.0" width="0.5" height="5.0" fill="#999"/><rect x="13.6" y="23.4" width="1.3" height="6.6" fill="#6a9ad0"/><rect x="13.6" y="19.0" width="1.3" height="4.4" fill="#e8a070"/><rect x="13.9" y="31.0" width="0.5" height="3.0" fill="#999"/><rect x="15.8" y="24.0" width="1.3" height="6.0" fill="#6a9ad0"/><rect x="15.8" y="20.0" width="1.3" height="4.0" fill="#e8a070"/><rect x="16.1" y="31.0" width="0.5" height="4.0" fill="#999"/><rect x="18.0" y="24.0" width="1.3" height="6.0" fill="#6a9ad0"/><rect x="18.0" y="20.0" width="1.3" height="4.0" fill="#e8a070"/><rect x="18.3" y="31.0" width="0.5" height="5.0" fill="#999"/><rect x="20.2" y="24.6" width="1.3" height="5.4" fill="#6a9ad0"/><rect x="20.2" y="21.0" width="1.3" height="3.6" fill="#e8a070"/><rect x="20.5" y="31.0" width="0.5" height="3.0" fill="#999"/><rect x="22.4" y="25.2" width="1.3" height="4.8" fill="#6a9ad0"/><rect x="22.4" y="22.0" width="1.3" height="3.2" fill="#e8a070"/><rect x="22.7" y="31.0" width="0.5" height="4.0" fill="#999"/><rect x="24.6" y="25.2" width="1.3" height="4.8" fill="#6a9ad0"/><rect x="24.6" y="22.0" width="1.3" height="3.2" fill="#e8a070"/><rect x="24.9" y="31.0" width="0.5" height="5.0" fill="#999"/><rect x="26.8" y="26.4" width="1.3" height="3.6" fill="#6a9ad0"/><rect x="26.8" y="24.0" width="1.3" height="2.4" fill="#e8a070"/><rect x="27.1" y="31.0" width="0.5" height="3.0" fill="#999"/><rect x="29.0" y="27.0" width="1.3" height="3.0" fill="#6a9ad0"/><rect x="29.0" y="25.0" width="1.3" height="2.0" fill="#e8a070"/><rect x="29.3" y="31.0" width="0.5" height="4.0" fill="#999"/><rect x="31.2" y="27.0" width="1.3" height="3.0" fill="#6a9ad0"/><rect x="31.2" y="25.0" width="1.3" height="2.0" fill="#e8a070"/><rect x="31.5" y="31.0" width="0.5" height="5.0" fill="#999"/><rect x="33.4" y="27.6" width="1.3" height="2.4" fill="#6a9ad0"/><rect x="33.4" y="26.0" width="1.3" height="1.6" fill="#e8a070"/><rect x="33.7" y="31.0" width="0.5" height="3.0" fill="#999"/><rect x="35.6" y="27.6" width="1.3" height="2.4" fill="#6a9ad0"/><rect x="35.6" y="26.0" width="1.3" height="1.6" fill="#e8a070"/><rect x="35.9" y="31.0" width="0.5" height="4.0" fill="#999"/><rect x="37.8" y="28.2" width="1.3" height="1.8" fill="#6a9ad0"/><rect x="37.8" y="27.0" width="1.3" height="1.2" fill="#e8a070"/><rect x="38.1" y="31.0" width="0.5" height="5.0" fill="#999"/><rect x="40.0" y="28.8" width="1.3" height="1.2" fill="#6a9ad0"/><rect x="40.0" y="28.0" width="1.3" height="0.8" fill="#e8a070"/><rect x="40.3" y="31.0" width="0.5" height="3.0" fill="#999"/><rect x="42.2" y="28.8" width="1.3" height="1.2" fill="#6a9ad0"/><rect x="42.2" y="28.0" width="1.3" height="0.8" fill="#e8a070"/><rect x="42.5" y="31.0" width="0.5" height="4.0" fill="#999"/><rect x="44.4" y="29.4" width="1.3" height="0.6" fill="#6a9ad0"/><rect x="44.4" y="29.0" width="1.3" height="0.4" fill="#e8a070"/><rect x="44.7" y="31.0" width="0.5" height="5.0" fill="#999"/><rect x="46.6" y="29.4" width="1.3" height="0.6" fill="#6a9ad0"/><rect x="46.6" y="29.0" width="1.3" height="0.4" fill="#e8a070"/><rect x="46.9" y="31.0" width="0.5" height="3.0" fill="#999"/><rect x="48.8" y="29.4" width="1.3" height="0.6" fill="#6a9ad0"/><rect x="48.8" y="29.0" width="1.3" height="0.4" fill="#e8a070"/><rect x="49.1" y="31.0" width="0.5" height="4.0" fill="#999"/><rect x="6.0" y="15.0" width="1.0" height="15.0" fill="#ccc"/><rect x="50.0" y="22.0" width="4.0" height="0.6" fill="#ccc"/><rect x="50.0" y="25.0" width="4.0" height="0.6" fill="#ccc"/><rect x="50.0" y="28.0" width="4.0" height="0.6" fill="#ccc"/><g transform="translate(72.5 30) scale(1.18) translate(-72.5 -30)"><circle cx="72.5" cy="30" r="8.5" fill="#5b9bd5"/><path d="M72.5 30V21.5A8.5 8.5 0 0 1 80.5 27z" fill="#ed7d31"/><path d="M72.5 30L64.3 27.5A8.5 8.5 0 0 0 69 37.8z" fill="#ffc000"/><path d="M72.5 30L67 23.5A8.5 8.5 0 0 0 64.3 27.5z" fill="#4472c4"/><path d="M72.5 30V21.5A8.5 8.5 0 0 0 67 23.5z" fill="#70ad47"/></g><rect x="0" y="46.4" width="87" height="2.6" fill="#94adba"/><rect x="79" y="47.2" width="2.5" height="1" fill="#555"/></svg><div class="t" style="left:1.6px;top:134.24px;font-size:17.4px;color:#444">65</div>
<div class="a" style="left:30px;top:211.0px;width:91px;height:53px;background:#fff;border:1px solid #c8c8c8"></div><svg style="left:32px;top:213.0px" width="87" height="49" viewBox="0 0 87 49"><rect x="0" y="0" width="87" height="49" fill="#fff"/><rect x="0" y="0" width="87" height="5.3" fill="#333"/><path d="M3.6 1.4h1.6v1.8l-0.8 1-0.8-1z" fill="#bbb"/><rect x="6" y="1.8" width="5" height="1.6" fill="#999"/><text x="4.8" y="10.5" font-family="Liberation Sans" font-weight="normal" font-size="4.03" stroke-width="0.12" stroke="#4f5d7c" fill="#4f5d7c" textLength="66.0" lengthAdjust="spacingAndGlyphs">Guideline Violations are Prevalent</text><defs><linearGradient id="g66" x1="0" y1="0" x2="0" y2="1"><stop offset="0" stop-color="#fff"/><stop offset="1" stop-color="#d8d8d8"/></linearGradient></defs><rect x="30.8" y="12.3" width="48.7" height="33" fill="url(#g66)" stroke="#555" stroke-width="0.5"/><rect x="37.0" y="16.3" width="2.3" height="24.7" fill="#4a88cc"/><rect x="40.6" y="22.0" width="2.3" height="19.0" fill="#4a88cc"/><rect x="44.2" y="32.5" width="2.3" height="8.5" fill="#4a88cc"/><rect x="47.8" y="33.4" width="2.3" height="7.6" fill="#4a88cc"/><rect x="51.4" y="38.1" width="2.3" height="2.8" fill="#4a88cc"/><rect x="55.0" y="38.1" width="2.3" height="2.8" fill="#4a88cc"/><rect x="58.6" y="39.1" width="2.3" height="1.9" fill="#4a88cc"/><rect x="62.2" y="39.1" width="2.3" height="1.9" fill="#4a88cc"/><rect x="65.8" y="40.0" width="2.3" height="0.9" fill="#4a88cc"/><rect x="69.4" y="40.0" width="2.3" height="0.9" fill="#4a88cc"/><rect x="73.0" y="39.1" width="2.3" height="1.9" fill="#4a88cc"/><rect x="4.0" y="14.0" width="0.8" height="0.7" fill="#555"/><rect x="7.0" y="13.8" width="11.0" height="0.9" fill="#666"/><rect x="7.0" y="16.0" width="11.0" height="0.9" fill="#666"/><rect x="7.0" y="18.2" width="9.0" height="0.9" fill="#666"/><rect x="7.0" y="20.6" width="5.0" height="0.9" fill="#e05050"/><rect x="13.0" y="20.6" width="6.0" height="0.9" fill="#666"/><rect x="7.0" y="22.8" width="9.0" height="0.9" fill="#666"/><rect x="44.0" y="43.0" width="15.0" height="0.5" fill="#999"/><rect x="0" y="46.4" width="87" height="2.6" fill="#94adba"/><rect x="79" y="47.2" width="2.5" height="1" fill="#555"/></svg><div class="t" style="left:1.6px;top:210.24px;font-size:17.4px;color:#444">66</div>
<div class="a" style="left:28px;top:285.0px;width:95px;height:57px;background:#ee6d4b"></div><div class="a" style="left:31px;top:288.0px;width:89px;height:51px;background:#fff"></div><svg style="left:32px;top:289.0px" width="87" height="49" viewBox="0 0 87 49"><rect x="0" y="0" width="87" height="49" fill="#fff"/><rect x="0" y="0" width="87" height="5.3" fill="#333"/><path d="M3.6 1.4h1.6v1.8l-0.8 1-0.8-1z" fill="#bbb"/><rect x="6" y="1.8" width="5" height="1.6" fill="#999"/><text x="5.0" y="10.3" font-family="Liberation Sans" font-weight="normal" font-size="4.03" stroke-width="0.12" stroke="#4f5d7c" fill="#4f5d7c" textLength="66.0" lengthAdjust="spacingAndGlyphs">Guideline Violations are Prevalent</text><rect x="31.2" y="12.3" width="48.6" height="32.5" fill="#fff" stroke="#566" stroke-width="0.5"/><rect x="36.0" y="14.0" width="41.0" height="0.3" fill="#ececec"/><rect x="36.0" y="16.4" width="41.0" height="0.3" fill="#ececec"/><rect x="36.0" y="18.8" width="41.0" height="0.3" fill="#ececec"/><rect x="36.0" y="21.2" width="41.0" height="0.3" fill="#ececec"/><rect x="36.0" y="23.6" width="41.0" height="0.3" fill="#ececec"/><rect x="36.0" y="26.0" width="41.0" height="0.3" fill="#ececec"/><rect x="36.0" y="28.4" width="41.0" height="0.3" fill="#ececec"/><rect x="36.0" y="30.8" width="41.0" height="0.3" fill="#ececec"/><rect x="36.0" y="33.2" width="41.0" height="0.3" fill="#ececec"/><rect x="36.0" y="35.6" width="41.0" height="0.3" fill="#ececec"/><rect x="36.0" y="38.0" width="41.0" height="0.3" fill="#ececec"/><rect x="37.5" y="17.5" width="4.9" height="20.5" fill="#9dbde4"/><rect x="47.3" y="35.6" width="4.9" height="2.4" fill="#9dbde4"/><rect x="4.0" y="13.8" width="0.9" height="0.9" fill="#444"/><rect x="7.0" y="13.5" width="11.0" height="0.8" fill="#666"/><rect x="7.0" y="15.9" width="12.0" height="0.8" fill="#666"/><rect x="7.0" y="18.3" width="10.0" height="0.8" fill="#666"/><rect x="7.0" y="20.7" width="9.0" height="0.8" fill="#666"/><rect x="7.0" y="23.1" width="8.0" height="0.8" fill="#666"/><rect x="44.0" y="41.0" width="15.0" height="0.5" fill="#aaa"/><rect x="0" y="46.4" width="87" height="2.6" fill="#94adba"/><rect x="79" y="47.2" width="2.5" height="1" fill="#555"/></svg><div class="t" style="left:1.6px;top:286.24px;font-size:17.4px;color:#d24726">67</div>
<div class="a" style="left:30px;top:363.0px;width:91px;height:53px;background:#fff;border:1px solid #c8c8c8"></div><svg style="left:32px;top:365.0px" width="87" height="49" viewBox="0 0 87 49"><rect x="0" y="0" width="87" height="49" fill="#fff"/><rect x="0" y="0" width="87" height="5.3" fill="#333"/><path d="M3.6 1.4h1.6v1.8l-0.8 1-0.8-1z" fill="#bbb"/><rect x="6" y="1.8" width="5" height="1.6" fill="#999"/><text x="5.0" y="10.6" font-family="Liberation Sans" font-weight="normal" font-size="3.92" stroke-width="0.12" stroke="#4f5d7c" fill="#4f5d7c" textLength="55.0" lengthAdjust="spacingAndGlyphs">"OCR" for Illegibility Detection</text><rect x="9.3" y="14" width="32.5" height="29.4" fill="#333"/><rect x="9.8" y="14.5" width="31.5" height="13.5" fill="#a83830"/><rect x="9.8" y="28.5" width="31.5" height="3.5" fill="#fff"/><rect x="9.8" y="32.5" width="10" height="10.5" fill="#a0804a"/><rect x="20.3" y="32.5" width="10.5" height="10.5" fill="#60a0a0"/><rect x="31.3" y="32.5" width="10.5" height="10.5" fill="#e0a030"/><rect x="9.3" y="14" width="32.5" height="29.4" fill="none" stroke="#5a5" stroke-width="0.5"/><rect x="46.0" y="14" width="32.5" height="29.4" fill="#333"/><rect x="46.5" y="14.5" width="31.5" height="13.5" fill="#4a8a70"/><rect x="46.5" y="28.5" width="31.5" height="3.5" fill="#fff"/><rect x="46.5" y="32.5" width="10" height="10.5" fill="#a0804a"/><rect x="57.0" y="32.5" width="10.5" height="10.5" fill="#60a0a0"/><rect x="68.0" y="32.5" width="10.5" height="10.5" fill="#e0a030"/><rect x="46.0" y="14" width="32.5" height="29.4" fill="none" stroke="#5a5" stroke-width="0.5"/><path d="M11 14.5c5 2 9 6 11.5 13.5" stroke="#e0c8b8" stroke-width="2" fill="none" opacity="0.8"/><rect x="13" y="16" width="2.5" height="2.5" fill="none" stroke="#6c6" stroke-width="0.4"/><rect x="36" y="16" width="3" height="2.5" fill="none" stroke="#6c6" stroke-width="0.4"/><rect x="20.0" y="21.5" width="7.0" height="0.7" fill="#e8c0b0"/><rect x="56.0" y="21.5" width="7.0" height="0.7" fill="#f0f0f0"/><rect x="11.0" y="30.0" width="6.0" height="0.5" fill="#999"/><rect x="48.0" y="30.0" width="6.0" height="0.5" fill="#999"/><rect x="47" y="14.5" width="3" height="13.5" fill="#2a6a40"/><rect x="50" y="14.5" width="9" height="13.5" fill="#d8d0c8"/><rect x="59" y="14.5" width="4" height="13.5" fill="#4a7a60"/><rect x="63" y="14.5" width="14.5" height="13.5" fill="#30a0a0"/><path d="M10 34l8 8M21 34l9 8M58 34l9 8M70 34l7 7" stroke="#333" stroke-width="0.6" opacity="0.5"/><rect x="0" y="46.4" width="87" height="2.6" fill="#94adba"/><rect x="79" y="47.2" width="2.5" height="1" fill="#555"/></svg><div class="t" style="left:1.6px;top:362.24px;font-size:17.4px;color:#444">68</div>
<div class="a" style="left:30px;top:439.0px;width:91px;height:53px;background:#fff;border:1px solid #c8c8c8"></div><svg style="left:32px;top:441.0px" width="87" height="49" viewBox="0 0 87 49"><rect x="0" y="0" width="87" height="49" fill="#fff"/><rect x="0" y="0" width="87" height="5.3" fill="#333"/><path d="M3.6 1.4h1.6v1.8l-0.8 1-0.8-1z" fill="#bbb"/><rect x="6" y="1.8" width="5" height="1.6" fill="#999"/><text x="5.0" y="10.6" font-family="Liberation Sans" font-weight="normal" font-size="3.92" stroke-width="0.12" stroke="#6678a8" fill="#6678a8" textLength="62.5" lengthAdjust="spacingAndGlyphs">Easy-to-Spot, Serious Violations</text><rect x="4.0" y="15.0" width="15.8" height="27.7" fill="#ddd"/><rect x="4.0" y="15.0" width="15.8" height="1.5" fill="#333"/><rect x="4.0" y="41.4" width="15.8" height="1.3" fill="#111"/><rect x="4.0" y="28.0" width="15.8" height="1.2" fill="#4a88cc"/><rect x="4.0" y="18.5" width="16.0" height="2.8" fill="none" stroke="#e00" stroke-width="0.7"/><rect x="6.0" y="22.0" width="11.5" height="2.5" fill="none" stroke="#e00" stroke-width="0.7"/><rect x="25.0" y="15.0" width="16.0" height="27.7" fill="#fff"/><rect x="25.0" y="15.0" width="16.0" height="1.5" fill="#333"/><rect x="25.0" y="41.4" width="16.0" height="1.3" fill="#111"/><rect x="25.0" y="18.0" width="16.0" height="1.5" fill="#1a4a80"/><rect x="26.5" y="27.0" width="13.0" height="6.0" fill="none" stroke="#e00" stroke-width="0.7"/><rect x="24.5" y="37.5" width="17.0" height="2.8" fill="none" stroke="#e00" stroke-width="0.7"/><rect x="45.7" y="15.0" width="15.3" height="27.7" fill="#5ab0e8"/><rect x="45.7" y="15.0" width="15.3" height="1.5" fill="#0a4a90"/><rect x="45.7" y="41.4" width="15.3" height="1.3" fill="#111"/><rect x="45.7" y="30.0" width="15.3" height="6.0" fill="#8ad0f8"/><rect x="46.0" y="18.5" width="15.5" height="2.8" fill="none" stroke="#e00" stroke-width="0.7"/><rect x="47.5" y="22.0" width="12.5" height="10.0" fill="none" stroke="#e00" stroke-width="0.7"/><rect x="66.8" y="15.0" width="15.2" height="27.7" fill="#1a3a80"/><rect x="66.8" y="15.0" width="15.2" height="1.5" fill="#2a6ab0"/><rect x="66.8" y="41.4" width="15.2" height="1.3" fill="#111"/><rect x="66.8" y="36.0" width="15.2" height="5.0" fill="#302050"/><rect x="66.8" y="18.5" width="15.8" height="8.5" fill="none" stroke="#e00" stroke-width="0.7"/><rect x="68.5" y="29.0" width="12.5" height="3.0" fill="none" stroke="#e00" stroke-width="0.7"/><rect x="69.0" y="37.0" width="4.0" height="2.0" fill="#e04040"/><rect x="0" y="46.4" width="87" height="2.6" fill="#94adba"/><rect x="79" y="47.2" width="2.5" height="1" fill="#555"/></svg><div class="t" style="left:1.6px;top:438.24px;font-size:17.4px;color:#444">69</div><svg style="left:9.3px;top:458.7px" width="13" height="11" viewBox="0 0 13 11"><path d="M6.25 0l1.6 3.9h4.4l-3.5 2.6 1.3 4.4-3.8-2.7-3.8 2.7 1.3-4.4L0.25 3.9h4.4z" fill="#666"/></svg>
<div class="a" style="left:30px;top:515.0px;width:91px;height:53px;background:#fff;border:1px solid #c8c8c8"></div><svg style="left:32px;top:517.0px" width="87" height="49" viewBox="0 0 87 49"><rect x="0" y="0" width="87" height="49" fill="#fff"/><rect x="0" y="0" width="87" height="5.3" fill="#333"/><path d="M3.6 1.4h1.6v1.8l-0.8 1-0.8-1z" fill="#bbb"/><rect x="6" y="1.8" width="5" height="1.6" fill="#999"/><text x="2.9" y="10.6" font-family="Liberation Sans" font-weight="normal" font-size="3.92" stroke-width="0.12" stroke="#6678a8" fill="#6678a8" textLength="80.5" lengthAdjust="spacingAndGlyphs">Hard-to-Notice, but Severity Ratings Vary</text><rect x="9" y="13.4" width="17" height="30.4" fill="#fff"/><rect x="9" y="13.4" width="17" height="10" fill="#4a7a50"/><rect x="9" y="13.4" width="17" height="1.5" fill="#2a5ab0"/><rect x="11.0" y="24.5" width="12.0" height="0.5" fill="#bbb"/><rect x="10.5" y="34.0" width="12.0" height="1.5" fill="none" stroke="#e00" stroke-width="0.7"/><rect x="8.0" y="35.8" width="20.0" height="2.8" fill="none" stroke="#e00" stroke-width="0.7"/><rect x="9.0" y="41.5" width="17.0" height="2.0" fill="#111"/><rect x="34.4" y="13.4" width="17.2" height="30.4" fill="#fff"/><rect x="34.4" y="13.4" width="17.2" height="2.3" fill="#3a90d0"/><rect x="36.0" y="13.5" width="12.0" height="2.5" fill="none" stroke="#e00" stroke-width="0.7"/><rect x="33.5" y="16.5" width="22.0" height="2.5" fill="none" stroke="#e00" stroke-width="0.7"/><rect x="36.0" y="22.0" width="14.0" height="2.0" fill="#cde"/><rect x="36.0" y="27.0" width="14.0" height="2.0" fill="#cde"/><rect x="36.0" y="32.0" width="14.0" height="2.0" fill="#cde"/><rect x="34.4" y="42.0" width="17.2" height="1.8" fill="#111"/><rect x="60" y="13.4" width="17.5" height="30.4" fill="#eee"/><rect x="60.0" y="13.4" width="17.5" height="1.5" fill="#802060"/><rect x="61.0" y="17.0" width="15.0" height="0.6" fill="#ccc"/><rect x="61.0" y="20.0" width="15.0" height="0.6" fill="#ccc"/><rect x="58.5" y="35.0" width="21.0" height="2.5" fill="none" stroke="#e00" stroke-width="0.7"/><rect x="60.0" y="38.0" width="17.5" height="3.0" fill="#111"/><rect x="58.5" y="41.5" width="21.0" height="2.5" fill="none" stroke="#e00" stroke-width="0.7"/><rect x="0" y="46.4" width="87" height="2.6" fill="#94adba"/><rect x="79" y="47.2" width="2.5" height="1" fill="#555"/></svg><div class="t" style="left:1.6px;top:514.24px;font-size:17.4px;color:#444">70</div><svg style="left:9.3px;top:534.7px" width="13" height="11" viewBox="0 0 13 11"><path d="M6.25 0l1.6 3.9h4.4l-3.5 2.6 1.3 4.4-3.8-2.7-3.8 2.7 1.3-4.4L0.25 3.9h4.4z" fill="#666"/></svg>
<div class="a" style="left:30px;top:591.0px;width:91px;height:53px;background:#fff;border:1px solid #c8c8c8"></div><svg style="left:32px;top:593.0px" width="87" height="49" viewBox="0 0 87 49"><rect x="0" y="0" width="87" height="49" fill="#fff"/><rect x="0" y="0" width="87" height="5.3" fill="#333"/><path d="M3.6 1.4h1.6v1.8l-0.8 1-0.8-1z" fill="#bbb"/><rect x="6" y="1.8" width="5" height="1.6" fill="#999"/><text x="5.2" y="10.6" font-family="Liberation Sans" font-weight="normal" font-size="3.92" stroke-width="0.12" stroke="#6678a8" fill="#6678a8" textLength="70.6" lengthAdjust="spacingAndGlyphs">Severity Ratings – Context Sensitive</text><rect x="12" y="13.4" width="16.8" height="30" fill="#eee"/><rect x="24" y="13.4" width="4.8" height="30" fill="#777"/><rect x="12.0" y="42.5" width="16.8" height="1.0" fill="#111"/><rect x="12.5" y="28.0" width="2.5" height="6.0" fill="none" stroke="#e00" stroke-width="0.7"/><rect x="12.5" y="38.0" width="14.0" height="2.5" fill="none" stroke="#e00" stroke-width="0.7"/><rect x="36.5" y="13.4" width="17.2" height="30" fill="#fff"/><rect x="36.5" y="13.4" width="17.2" height="1.5" fill="#d05040"/><rect x="46" y="15" width="7.7" height="27" fill="#666"/><rect x="36.5" y="41.0" width="17.2" height="2.4" fill="#111"/><rect x="37.0" y="27.0" width="5.5" height="5.0" fill="none" stroke="#e00" stroke-width="0.7"/><rect x="37.0" y="33.5" width="11.0" height="3.0" fill="none" stroke="#e00" stroke-width="0.7"/><rect x="61" y="13.4" width="17" height="30" fill="#3a3a4a"/><rect x="71.0" y="13.4" width="7.0" height="2.0" fill="#801020"/><rect x="61.5" y="31.0" width="7.5" height="11.5" fill="none" stroke="#e00" stroke-width="0.7"/><rect x="69.0" y="31.5" width="13.5" height="3.0" fill="none" stroke="#e00" stroke-width="0.7"/><rect x="61.0" y="42.0" width="17.0" height="1.4" fill="#111"/><rect x="0" y="46.4" width="87" height="2.6" fill="#94adba"/><rect x="79" y="47.2" width="2.5" height="1" fill="#555"/></svg><div class="t" style="left:1.6px;top:590.24px;font-size:17.4px;color:#444">71</div><svg style="left:9.3px;top:610.7px" width="13" height="11" viewBox="0 0 13 11"><path d="M6.25 0l1.6 3.9h4.4l-3.5 2.6 1.3 4.4-3.8-2.7-3.8 2.7 1.3-4.4L0.25 3.9h4.4z" fill="#666"/></svg>
<div class="a" style="left:30px;top:667.0px;width:91px;height:53px;background:#fff;border:1px solid #c8c8c8"></div><svg style="left:32px;top:669.0px" width="87" height="49" viewBox="0 0 87 49"><rect x="0" y="0" width="87" height="49" fill="#fff"/><rect x="0" y="0" width="87" height="5.3" fill="#333"/><path d="M3.6 1.4h1.6v1.8l-0.8 1-0.8-1z" fill="#bbb"/><rect x="6" y="1.8" width="5" height="1.6" fill="#999"/><text x="5.2" y="10.6" font-family="Liberation Sans" font-weight="normal" font-size="3.92" stroke-width="0.12" stroke="#6678a8" fill="#6678a8" textLength="72.7" lengthAdjust="spacingAndGlyphs">Violations are not Considered Serious</text><rect x="9" y="13.4" width="17" height="29.5" fill="#5a6a7a"/><rect x="9" y="13.4" width="17" height="8" fill="#3a80c0"/><rect x="18" y="25" width="7" height="4" fill="#6ac0f0"/><rect x="5.5" y="35.0" width="10.5" height="2.5" fill="none" stroke="#e00" stroke-width="0.7"/><rect x="21.5" y="30.0" width="5.5" height="12.0" fill="none" stroke="#e00" stroke-width="0.7"/><rect x="9.0" y="41.5" width="17.0" height="1.4" fill="#222"/><rect x="37" y="13.4" width="17.5" height="29.5" fill="#f4f4f4"/><rect x="37.0" y="13.4" width="6.0" height="2.0" fill="#d0c030"/><rect x="42.0" y="15.0" width="9.0" height="1.5" fill="#e0b000"/><rect x="41.0" y="17.0" width="13.5" height="4.5" fill="none" stroke="#e00" stroke-width="0.7"/><rect x="38.0" y="23.0" width="15.0" height="0.5" fill="#bbb"/><rect x="38.0" y="25.0" width="15.0" height="0.5" fill="#bbb"/><rect x="38.0" y="27.0" width="15.0" height="0.5" fill="#bbb"/><rect x="38.0" y="29.0" width="15.0" height="0.5" fill="#bbb"/><rect x="38.0" y="31.0" width="15.0" height="0.5" fill="#bbb"/><rect x="38.0" y="33.0" width="15.0" height="0.5" fill="#bbb"/><rect x="38.0" y="35.0" width="15.0" height="0.5" fill="#bbb"/><rect x="38.0" y="37.0" width="15.0" height="0.5" fill="#bbb"/><rect x="37.0" y="41.8" width="17.5" height="1.2" fill="#111"/><rect x="62" y="13.4" width="17.5" height="29.5" fill="#fff"/><rect x="61.5" y="15.0" width="18.0" height="3.0" fill="none" stroke="#e00" stroke-width="0.7"/><rect x="61.5" y="19.0" width="18.0" height="6.5" fill="none" stroke="#e00" stroke-width="0.7"/><circle cx="65.5" cy="31" r="1.9" fill="#f06060"/><circle cx="70.5" cy="31" r="1.9" fill="#70d070"/><rect x="61.5" y="38.0" width="18.5" height="3.0" fill="none" stroke="#e00" stroke-width="0.7"/><rect x="62.0" y="40.0" width="17.5" height="1.0" fill="#6a3ab0"/><rect x="62.0" y="42.0" width="17.5" height="1.0" fill="#222"/><rect x="0" y="46.4" width="87" height="2.6" fill="#94adba"/><rect x="79" y="47.2" width="2.5" height="1" fill="#555"/></svg><div class="t" style="left:1.6px;top:666.24px;font-size:17.4px;color:#444">72</div>
<div class="a" style="left:30px;top:743.0px;width:91px;height:53px;background:#fff;border:1px solid #c8c8c8"></div><svg style="left:32px;top:745.0px" width="87" height="49" viewBox="0 0 87 49"><rect x="0" y="0" width="87" height="49" fill="#fff"/><rect x="0" y="0" width="87" height="5.3" fill="#333"/><path d="M3.6 1.4h1.6v1.8l-0.8 1-0.8-1z" fill="#bbb"/><rect x="6" y="1.8" width="5" height="1.6" fill="#999"/><rect x="10.5" y="18.2" width="52.0" height="0.7" fill="#777"/><rect x="10.5" y="18.2" width="3.0" height="0.7" fill="#b08030"/><rect x="10.5" y="23.8" width="60.0" height="0.7" fill="#777"/><rect x="10.5" y="26.2" width="57.0" height="0.7" fill="#777"/><rect x="10.5" y="28.6" width="36.0" height="0.7" fill="#777"/><rect x="0" y="46.4" width="87" height="2.6" fill="#94adba"/><rect x="79" y="47.2" width="2.5" height="1" fill="#555"/></svg><div class="t" style="left:1.6px;top:742.24px;font-size:17.4px;color:#444">73</div>
<div class="a" style="left:145px;top:0;width:19px;height:800px;background:#dadada"></div>
<div class="a" style="left:145px;top:2px;width:19px;height:19px;background:#fff;border:1px solid #c6c6c6"></div>
<svg style="left:150px;top:9px" width="9" height="5" viewBox="0 0 9 5"><path d="M0 5h9L4.5 0z" fill="#666"/></svg>
<div class="a" style="left:145px;top:638px;width:19px;height:106px;background:#fff;border:1px solid #a8a8a8"></div>
<div class="a" style="left:145px;top:795px;width:19px;height:19px;background:#fff;border:1px solid #c6c6c6"></div>
<svg style="left:150px;top:802px" width="9" height="5" viewBox="0 0 9 5"><path d="M0 0h9L4.5 5z" fill="#666"/></svg>
</div>
<div class="a" style="left:168px;top:179px;width:1px;height:814px;background:#c4c4c4"></div>
<div class="a" style="left:169px;top:179px;width:859px;height:813px;background:#e6e6e6"></div>
<div class="a" style="left:188px;top:353px;width:822px;height:463px;background:#d2d2d2"></div>
<div class="a" style="left:189px;top:354px;width:820px;height:461px;background:#fff"></div>
<div class="a" style="left:189px;top:354px;width:820px;height:52px;background:#333"></div>
<div class="a" style="left:189px;top:791px;width:820px;height:24px;background:#94aebb"></div>
<div class="t" style="left:941.61px;top:796.00px;font-size:16.30px;letter-spacing:0.000px;color:#000;font-family:'Liberation Sans', sans-serif;">67</div>
<svg style="left:230px;top:360px" width="50" height="38" viewBox="0 0 50 38">
<g fill="none" stroke="#e0e0e0" stroke-width="0.9">
<path d="M11.8 0.8h26.2v18.5c0 6.5-5.5 10.8-13.1 11.8-7.6-1-13.1-5.3-13.1-11.8z"/>
<path d="M1.2 28.5c7 2.8 14.5 4.6 23.8 4.6s16.8-1.8 23.8-4.6l-1 5c-7 2.6-14 3.8-22.8 3.8s-15.8-1.2-22.8-3.8z"/>
<path d="M3.5 28.8c-2-2.5-1.5-6 1.5-7s5 0.5 6 2.5M46.5 28.8c2-2.5 1.5-6-1.5-7s-5 0.5-6 2.5"/>
<path d="M5 34.5l3-3.5M45 34.5l-3-3.5"/>
</g>
<path d="M13 17.8c3.5-3 7.5-5.8 12-5.8s8.5 2.8 12 5.8c-3 0.8-6 0.3-9 0s-6-0.5-9 0-4 0.5-6 0z" fill="#e8e8e8"/>
<g fill="none" stroke="#e8e8e8" stroke-width="1.3">
<path d="M13.2 20.6c2-1.3 4-1.3 6 0s4 1.3 6 0 4-1.3 6 0 4 1.3 5.8 0"/>
<path d="M13.6 23.8c2-1.3 4-1.3 6 0s4 1.3 6 0 4-1.3 6 0 4 1.3 5.4 0"/>
<path d="M15.2 27c2-1.2 3.5-1.2 5.3 0s3.8 1.2 5.6 0 3.6-1.2 5.4 0 2.4 0.6 3.2 0.2"/>
</g>
<g fill="#f0f0f0"><circle cx="22" cy="6.5" r="1.1"/><circle cx="25.5" cy="3.8" r="1"/><circle cx="28.5" cy="7" r="1"/><circle cx="25.3" cy="9.8" r="1"/><circle cx="27" cy="5.3" r="0.5"/></g>
</svg>
<div class="t" style="left:284.83px;top:361.37px;font-size:12.20px;letter-spacing:0.061px;color:#f2f2f2;font-family:'Liberation Sans', sans-serif;">Australian</div>
<div class="t" style="left:284.83px;top:373.27px;font-size:12.20px;letter-spacing:0.034px;color:#f2f2f2;font-family:'Liberation Sans', sans-serif;">National</div>
<div class="t" style="left:284.83px;top:384.67px;font-size:12.20px;letter-spacing:0.116px;color:#f2f2f2;font-family:'Liberation Sans', sans-serif;">University</div>
<div class="t" style="left:238.26px;top:425.02px;font-size:41.20px;letter-spacing:-0.049px;color:#000;font-family:'Liberation Sans', sans-serif;;transform:scaleY(1.0400);transform-origin:0 34.88px">Guideline Violations are Prevalent</div>
<div class="a" style="left:239.6px;top:497.6px;width:6px;height:6px;border-radius:50%;background:#000"></div>
<div class="t" style="left:268.92px;top:490.46px;font-size:22.60px;letter-spacing:0.000px;color:#000;font-family:'Liberation Sans', sans-serif;;transform:scaleY(1.0100);transform-origin:0 19.14px">Among 65907</div>
<div class="t" style="left:268.92px;top:517.61px;font-size:22.60px;letter-spacing:0.000px;color:#000;font-family:'Liberation Sans', sans-serif;;transform:scaleY(1.0100);transform-origin:0 19.14px">GUIs, 5369 UIs</div>
<div class="t" style="left:268.92px;top:544.76px;font-size:22.60px;letter-spacing:0.000px;color:#000;font-family:'Liberation Sans', sans-serif;;transform:scaleY(1.0100);transform-origin:0 19.14px">(8.1%) have</div>
<div class="t" style="left:268.92px;top:571.91px;font-size:22.60px;letter-spacing:0.000px;color:#000;font-family:'Liberation Sans', sans-serif;;transform:scaleY(1.0100);transform-origin:0 19.14px">confirmed</div>
<div class="t" style="left:268.92px;top:599.06px;font-size:22.60px;letter-spacing:0.000px;color:#000;font-family:'Liberation Sans', sans-serif;;transform:scaleY(1.0100);transform-origin:0 19.14px">violations</div>
<div class="a" style="left:413px;top:518px;width:1px;height:22px;background:#000"></div>
<svg style="left:0;top:0" width="1049" height="1027" viewBox="0 0 1049 1027">
<rect x="229.5" y="482.5" width="241" height="284" fill="none" stroke="#777" stroke-width="1" stroke-dasharray="2 2"/>
<path d="M349.5 452v24" stroke="#a0a0a0" stroke-width="1.2"/>
<g fill="#fff" stroke="#a0a0a0" stroke-width="2">
<circle cx="229.8" cy="482.7" r="5.6"/><circle cx="349.8" cy="482.7" r="5.6"/><circle cx="470.5" cy="482.7" r="5.6"/>
<circle cx="229.8" cy="624.6" r="5.6"/><circle cx="470.5" cy="624.6" r="5.6"/>
<circle cx="229.8" cy="766.5" r="5.6"/><circle cx="349.8" cy="766.5" r="5.6"/><circle cx="470.5" cy="766.5" r="5.6"/>
</g>
<g>
<path d="M357.5 431A9.8 9.8 0 1 0 358.5 446" fill="none" stroke="#a0a0a0" stroke-width="6"/>
<path d="M357.5 431A9.8 9.8 0 1 0 358.5 446" fill="none" stroke="#fff" stroke-width="2.6"/>
<path d="M350.5 436.8l18-1.5-11 11.5z" fill="#a0a0a0"/>
<path d="M355.3 438.2l8.6-0.7-5.2 5.4z" fill="#fff"/>
</g>
</svg>
<svg style="left:0;top:0" width="1049" height="1027" viewBox="0 0 1049 1027">
<defs><linearGradient id="bar" x1="0" y1="0" x2="0" y2="1"><stop offset="0" stop-color="#b0c9e9"/><stop offset="1" stop-color="#92b6e3"/></linearGradient></defs>
<rect x="486.5" y="471.5" width="457.5" height="306.5" fill="#fff" stroke="#4f6e82" stroke-width="1"/>
<path d="M558 488.5H929.3" stroke="#d9d9d9" stroke-width="1"/>
<path d="M558 511.5H929.3" stroke="#d9d9d9" stroke-width="1"/>
<path d="M558 534.5H929.3" stroke="#d9d9d9" stroke-width="1"/>
<path d="M558 558.5H929.3" stroke="#d9d9d9" stroke-width="1"/>
<path d="M558 581.5H929.3" stroke="#d9d9d9" stroke-width="1"/>
<path d="M558 605.5H929.3" stroke="#d9d9d9" stroke-width="1"/>
<path d="M558 628.5H929.3" stroke="#d9d9d9" stroke-width="1"/>
<path d="M558 652.5H929.3" stroke="#d9d9d9" stroke-width="1"/>
<path d="M558 675.5H929.3" stroke="#d9d9d9" stroke-width="1"/>
<path d="M558 699.5H929.3" stroke="#d9d9d9" stroke-width="1"/>
<path d="M558 722.5H929.3" stroke="#d9d9d9" stroke-width="1"/>
<rect x="581.5" y="519.6" width="46" height="202.5" fill="url(#bar)" stroke="#5b9bd5" stroke-width="1"/>
<rect x="674.5" y="699.0" width="46" height="23.1" fill="url(#bar)" stroke="#5b9bd5" stroke-width="1"/>
<rect x="767.2" y="721.8" width="46" height="0.3" fill="url(#bar)" stroke="#5b9bd5" stroke-width="1"/>
<rect x="860.0" y="721.4" width="46" height="0.7" fill="url(#bar)" stroke="#5b9bd5" stroke-width="1"/>
</svg>
<div class="t" style="left:522.53px;top:481.40px;font-size:12.30px;letter-spacing:0.000px;color:#595959;font-family:'Liberation Serif', serif;">5000</div>
<div class="t" style="left:522.53px;top:504.85px;font-size:12.30px;letter-spacing:0.000px;color:#595959;font-family:'Liberation Serif', serif;">4500</div>
<div class="t" style="left:522.53px;top:528.30px;font-size:12.30px;letter-spacing:0.000px;color:#595959;font-family:'Liberation Serif', serif;">4000</div>
<div class="t" style="left:522.53px;top:551.75px;font-size:12.30px;letter-spacing:0.000px;color:#595959;font-family:'Liberation Serif', serif;">3500</div>
<div class="t" style="left:522.53px;top:575.20px;font-size:12.30px;letter-spacing:0.000px;color:#595959;font-family:'Liberation Serif', serif;">3000</div>
<div class="t" style="left:522.53px;top:598.65px;font-size:12.30px;letter-spacing:0.000px;color:#595959;font-family:'Liberation Serif', serif;">2500</div>
<div class="t" style="left:522.53px;top:622.10px;font-size:12.30px;letter-spacing:0.000px;color:#595959;font-family:'Liberation Serif', serif;">2000</div>
<div class="t" style="left:522.53px;top:645.55px;font-size:12.30px;letter-spacing:0.000px;color:#595959;font-family:'Liberation Serif', serif;">1500</div>
<div class="t" style="left:522.53px;top:669.00px;font-size:12.30px;letter-spacing:0.000px;color:#595959;font-family:'Liberation Serif', serif;">1000</div>
<div class="t" style="left:528.63px;top:692.45px;font-size:12.30px;letter-spacing:0.000px;color:#595959;font-family:'Liberation Serif', serif;">500</div>
<div class="t" style="left:540.83px;top:715.90px;font-size:12.30px;letter-spacing:0.000px;color:#595959;font-family:'Liberation Serif', serif;">0</div>
<div class="t" style="left:601.03px;top:730.40px;font-size:12.30px;letter-spacing:0.000px;color:#595959;font-family:'Liberation Serif', serif;">1</div>
<div class="t" style="left:694.03px;top:730.40px;font-size:12.30px;letter-spacing:0.000px;color:#595959;font-family:'Liberation Serif', serif;">2</div>
<div class="t" style="left:786.73px;top:730.40px;font-size:12.30px;letter-spacing:0.000px;color:#595959;font-family:'Liberation Serif', serif;">3</div>
<div class="t" style="left:879.53px;top:730.40px;font-size:12.30px;letter-spacing:0.000px;color:#595959;font-family:'Liberation Serif', serif;">4</div>
<div class="t" style="left:591.83px;top:500.50px;font-size:12.30px;letter-spacing:0.000px;color:#595959;font-family:'Liberation Serif', serif;">4318</div>
<div class="t" style="left:687.91px;top:679.90px;font-size:12.30px;letter-spacing:0.000px;color:#595959;font-family:'Liberation Serif', serif;">493</div>
<div class="t" style="left:786.76px;top:702.60px;font-size:12.30px;letter-spacing:0.000px;color:#595959;font-family:'Liberation Serif', serif;">3</div>
<div class="t" style="left:876.48px;top:702.60px;font-size:12.30px;letter-spacing:0.000px;color:#595959;font-family:'Liberation Serif', serif;">14</div>
<div class="t" style="left:666.93px;top:748.82px;font-size:12.40px;letter-spacing:0.018px;color:#595959;font-family:'Liberation Serif', serif;">Number of Violations Per GUI</div>
<div class="t" style="left:506.2px;top:642.0px;font-size:12.3px;color:#595959;font-family:'Liberation Serif',serif;transform:rotate(-90deg);transform-origin:0 0;letter-spacing:0.07px">Number of UIs</div>
<div class="a" style="left:1028px;top:179px;width:19px;height:745px;background:#dadada"></div>
<div class="a" style="left:1028px;top:181px;width:19px;height:19px;background:#fff;border:1px solid #c6c6c6"></div>
<svg style="left:1033px;top:188px" width="9" height="5" viewBox="0 0 9 5"><path d="M0 5h9L4.5 0z" fill="#666"/></svg>
<div class="a" style="left:1028px;top:786px;width:19px;height:21px;background:#fff;border:1px solid #a8a8a8"></div>
<div class="a" style="left:1028px;top:905px;width:19px;height:19px;background:#fff;border:1px solid #c6c6c6"></div>
<svg style="left:1033px;top:912px" width="9" height="5" viewBox="0 0 9 5"><path d="M0 0h9L4.5 5z" fill="#666"/></svg>
<svg style="left:1032px;top:930px" width="10" height="11" viewBox="0 0 10 11"><path d="M0 5h10L5 0zM0 10.5h10L5 5.5z" fill="#777"/></svg>
<svg style="left:1032px;top:952px" width="10" height="11" viewBox="0 0 10 11"><path d="M0 0h10L5 5zM0 5.5h10L5 10.5z" fill="#777"/></svg>
<svg style="left:1027px;top:486px" width="22" height="46" viewBox="0 0 22 46">
<circle cx="23" cy="23" r="22" fill="#0f7ce0"/>
<path d="M8.5 18.5l7-4.5 7 4.5-7 4.5zM8.5 27.5l7-4.5 7 4.5-7 4.5zM16.5 33l6-4 6 4-6 4z" fill="#fff"/>
</svg>
<div class="a" style="left:171px;top:992px;width:877px;height:1px;background:#c4c4c4"></div>
<div class="a" style="left:0;top:995px;width:1048px;height:27px;background:#f1f1f1;border-top:1px solid #c6c6c6"></div>
<div class="t" style="left:3.59px;top:1002.00px;font-size:13.70px;letter-spacing:-0.323px;color:#444;font-family:'Liberation Sans', sans-serif;">Slide 67 of 78</div>
<svg style="left:104px;top:1000px" width="18" height="15" viewBox="0 0 18 15">
<path d="M0.6 1.2h6.5l1.6 1.3 1.6-1.3h1.2M0.6 1.2v11.5h6.5l1.6 1.5 1.6-1.5h1.2M8.7 2.5v11.7" fill="none" stroke="#666" stroke-width="1.1"/>
<path d="M12 2.5l4.5 4.5M16.5 2.5L12 7" stroke="#666" stroke-width="1.6"/>
</svg>
<div class="t" style="left:138.89px;top:1002.17px;font-size:13.50px;letter-spacing:-0.413px;color:#444;font-family:'Liberation Sans', sans-serif;">English (United States)</div>
<svg style="left:456px;top:1001px" width="15" height="14" viewBox="0 0 15 14">
<path d="M4 3.5L7.5 0.5 11 3.5z" fill="#666"/><path d="M0.5 6h14M0.5 9h14M0.5 12h9" stroke="#666" stroke-width="1.1"/>
</svg>
<div class="t" style="left:476.19px;top:1001.98px;font-size:13.72px;letter-spacing:-0.436px;color:#444;font-family:'Liberation Sans', sans-serif;">Notes</div>
<svg style="left:532px;top:1000px" width="15" height="16" viewBox="0 0 15 16">
<path d="M0 0h15v11H8l-4 4.5V11H0z" fill="#666"/>
</svg>
<div class="t" style="left:552.30px;top:1002.18px;font-size:13.48px;letter-spacing:-0.626px;color:#444;font-family:'Liberation Sans', sans-serif;">Comments</div>
<div class="a" style="left:634px;top:995.5px;width:41px;height:26px;background:#c8c8c8"></div>
<svg style="left:646px;top:1000px" width="15" height="14" viewBox="0 0 15 14">
<rect x="0.6" y="0.6" width="13.8" height="12.8" fill="none" stroke="#666" stroke-width="1.2"/>
<path d="M3.5 1v12" stroke="#666" stroke-width="1.2"/><rect x="5.5" y="3" width="6.5" height="5" fill="none" stroke="#666" stroke-width="1"/>
<path d="M5.5 10.5h7" stroke="#666" stroke-width="1"/>
</svg>
<svg style="left:688px;top:1001px" width="14" height="14" viewBox="0 0 14 14">
<g fill="none" stroke="#666" stroke-width="1.1"><rect x="0.6" y="0.6" width="5" height="4.8"/><rect x="8.4" y="0.6" width="5" height="4.8"/><rect x="0.6" y="8.4" width="5" height="4.8"/><rect x="8.4" y="8.4" width="5" height="4.8"/></g>
</svg>
<svg style="left:729px;top:1002px" width="14" height="12" viewBox="0 0 14 12">
<path d="M0.6 0.6h5.5l1 1 1-1h5.3v10h-5.3l-1 1-1-1H0.6z" fill="none" stroke="#666" stroke-width="1.1"/>
<path d="M7 1.5v9M2 3h3.5M2 5h3.5M2 7h3.5M8.5 3h3.5M8.5 5h3.5M8.5 7h3.5" stroke="#666" stroke-width="0.9"/>
</svg>
<svg style="left:770px;top:1002px" width="13" height="12" viewBox="0 0 13 12">
<path d="M0 0.6h13" stroke="#666" stroke-width="1.2"/><path d="M1.5 1v5h10V1" fill="none" stroke="#666" stroke-width="1.1"/>
<path d="M6.5 6v5M3.5 11.4h6" stroke="#666" stroke-width="1.1"/>
</svg>
<div class="a" style="left:803px;top:1007.5px;width:8.5px;height:1.8px;background:#555"></div>
<div class="a" style="left:817px;top:1008px;width:124px;height:1px;background:#a8a8a8"></div>
<div class="a" style="left:878px;top:1005px;width:1px;height:6px;background:#a8a8a8"></div>
<div class="a" style="left:855.5px;top:1002px;width:5.5px;height:12.5px;background:#555"></div>
<div class="a" style="left:945px;top:1007.5px;width:12px;height:1.8px;background:#555"></div>
<div class="a" style="left:950.1px;top:1002.5px;width:1.8px;height:12px;background:#555"></div>
<div class="t" style="left:971.51px;top:1002.89px;font-size:13.00px;letter-spacing:-0.960px;color:#444;font-family:'Liberation Sans', sans-serif;">69%</div>
<svg style="left:1013px;top:1002px" width="15" height="14" viewBox="0 0 15 14">
<rect x="0.6" y="0.6" width="13.8" height="12.8" rx="0.8" fill="none" stroke="#666" stroke-width="1.1"/>
<path d="M7.5 2v3M7.5 9v3M2 7h3M10 7h3" stroke="#666" stroke-width="1"/>
<path d="M6.3 3.3L7.5 2l1.2 1.3M6.3 10.7L7.5 12l1.2-1.3M3.3 5.8L2 7l1.3 1.2M11.7 5.8L13 7l-1.3 1.2" fill="none" stroke="#666" stroke-width="0.9"/>
</svg>
<div class="a" style="left:1048px;top:0;width:1px;height:1023px;background:#b7472a"></div>
<div class="a" style="left:0;top:1022px;width:1049px;height:1px;background:#b7472a"></div>
<div class="a" style="left:0;top:1023px;width:1049px;height:4px;background:#bdbdbd"></div>
<div class="a" style="left:316px;top:1025px;width:733px;height:2px;background:#1e2a44"></div>
</body></html>
